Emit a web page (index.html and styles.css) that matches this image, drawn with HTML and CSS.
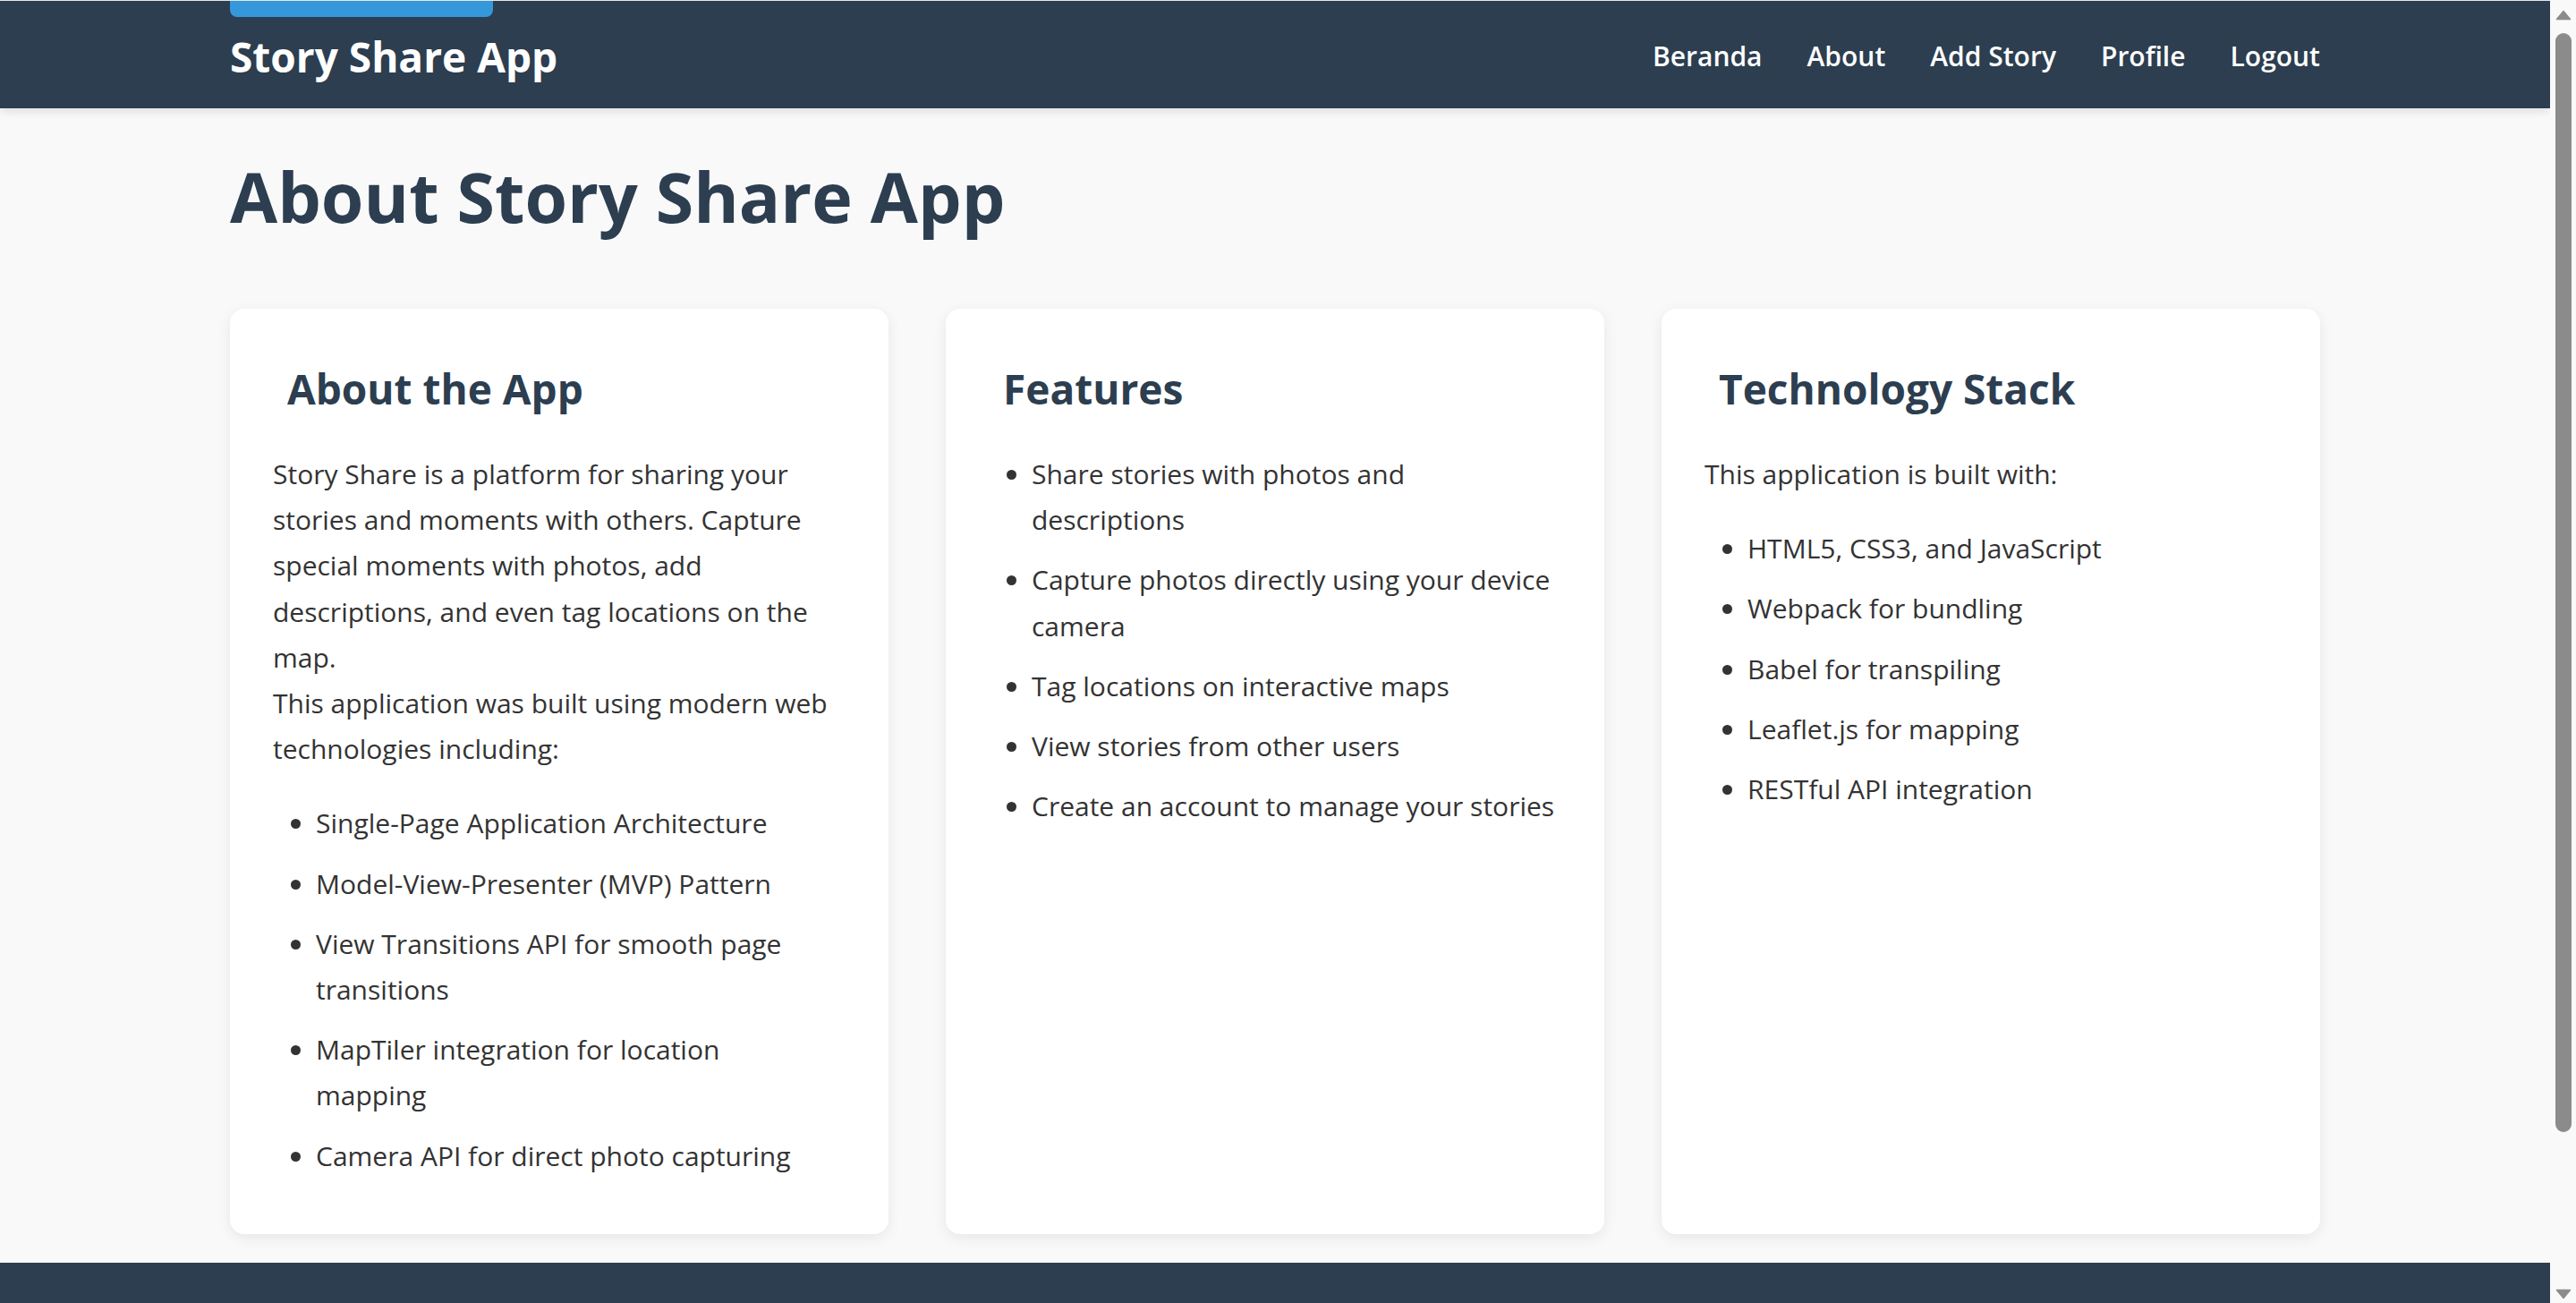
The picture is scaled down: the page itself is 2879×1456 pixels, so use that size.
FILE: index.html
```html
<!DOCTYPE html>
<html lang="en">
<head>
<meta charset="utf-8">
<title>About - Story Share App</title>
<link rel="stylesheet" href="styles.css">
</head>
<body>
<a class="skip-link" href="#main" aria-label="Skip to content"></a>
<header class="app-bar">
  <div class="app-bar__inner">
    <a class="brand" href="#/">Story Share App</a>
    <nav class="main-nav">
      <ul class="nav-list">
        <li><a href="#/">Beranda</a></li>
        <li><a href="#/about">About</a></li>
        <li><a href="#/add">Add Story</a></li>
        <li><a href="#/profile">Profile</a></li>
        <li><a href="#/logout">Logout</a></li>
      </ul>
    </nav>
  </div>
</header>
<main class="page" id="main">
  <h1 class="page-title">About Story Share App</h1>
  <div class="cards">
    <section class="card">
      <h2 class="card__title">About the App</h2>
      <p>Story Share is a platform for sharing your stories and moments with others. Capture special moments with photos, add descriptions, and even tag locations on the map.</p>
      <p>This application was built using modern web technologies including:</p>
      <ul class="card__list">
        <li>Single-Page Application Architecture</li>
        <li>Model-View-Presenter (MVP) Pattern</li>
        <li>View Transitions API for smooth page transitions</li>
        <li>MapTiler integration for location<br>mapping</li>
        <li>Camera API for direct photo capturing</li>
      </ul>
    </section>
    <section class="card">
      <h2 class="card__title">Features</h2>
      <ul class="card__list">
        <li>Share stories with photos and descriptions</li>
        <li>Capture photos directly using your device camera</li>
        <li>Tag locations on interactive maps</li>
        <li>View stories from other users</li>
        <li>Create an account to manage your stories</li>
      </ul>
    </section>
    <section class="card">
      <h2 class="card__title">Technology Stack</h2>
      <p>This application is built with:</p>
      <ul class="card__list">
        <li>HTML5, CSS3, and JavaScript</li>
        <li>Webpack for bundling</li>
        <li>Babel for transpiling</li>
        <li>Leaflet.js for mapping</li>
        <li>RESTful API integration</li>
      </ul>
    </section>
  </div>
</main>
<footer class="site-footer"></footer>
<div class="scrollbar" aria-hidden="true">
  <svg class="scrollbar__arrow scrollbar__arrow--up" width="18" height="12" viewBox="0 0 18 12"><path d="M9 1.5 L16.5 10.5 L1.5 10.5 Z" fill="#8b8b8b" stroke="#8b8b8b" stroke-width="1.5" stroke-linejoin="round"/></svg>
  <div class="scrollbar__thumb"></div>
  <svg class="scrollbar__arrow scrollbar__arrow--down" width="18" height="12" viewBox="0 0 18 12"><path d="M9 10.5 L16.5 1.5 L1.5 1.5 Z" fill="#8b8b8b" stroke="#8b8b8b" stroke-width="1.5" stroke-linejoin="round"/></svg>
</div>
</body>
</html>
```
FILE: styles.css
```css
html {
  background: #f9f9f9;
}

::-webkit-scrollbar {
  width: 0;
  height: 0;
}

body {
  margin: 0 29px 0 0;
  position: relative;
  border-top: 1px solid #e6e6e6;
  background: #f9f9f9;
  color: #333333;
  font-family: "Open Sans", "Noto Sans", sans-serif;
}

.skip-link {
  position: absolute;
  top: 0;
  left: calc(50% - 1168px);
  width: 294px;
  height: 18px;
  background: #3498db;
  border-radius: 0 0 8px 8px;
  z-index: 10;
}

.app-bar {
  background: #2c3e50;
  box-shadow: 0 4px 10px rgba(0, 0, 0, 0.1);
  position: relative;
}

.app-bar__inner {
  max-width: 2336px;
  margin: 0 auto;
  height: 120px;
  box-sizing: border-box;
  padding-top: 3px;
  display: flex;
  align-items: center;
  justify-content: space-between;
}

.brand {
  color: #ffffff;
  text-decoration: none;
  font-size: 46px;
  font-weight: 700;
}

.nav-list {
  display: flex;
  gap: 50px;
  list-style: none;
  margin: 0;
  padding: 0;
}

.nav-list a {
  color: #ffffff;
  text-decoration: none;
  font-size: 30px;
  font-weight: 600;
}

.page {
  max-width: 2336px;
  margin: 0 auto;
  padding: 51px 0 32px;
}

.page-title {
  margin: 0 0 77px;
  font-size: 77px;
  line-height: 96px;
  font-weight: 700;
  color: #2c3e50;
}

.cards {
  display: grid;
  grid-template-columns: repeat(3, minmax(0, 1fr));
  gap: 64px;
}

.card {
  background: #ffffff;
  border-radius: 16px;
  padding: 48px 48px 46px;
  box-shadow: 0 4px 16px rgba(0, 0, 0, 0.08);
}

.card__title {
  margin: 13px 0 42px;
  padding-left: 16px;
  font-size: 46px;
  line-height: 56px;
  font-weight: 700;
  color: #2c3e50;
}

.card p {
  margin: 0;
  font-size: 30px;
  line-height: 51.2px;
}

.card__list {
  margin: 0;
  padding-left: 48px;
  font-size: 30px;
  line-height: 51.2px;
}

.card p + .card__list {
  margin-top: 32px;
}

.card__list li {
  margin-bottom: 16px;
}

.site-footer {
  background: #2c3e50;
  height: 240px;
}

.scrollbar {
  position: fixed;
  top: 1px;
  right: 0;
  bottom: 0;
  width: 29px;
  background: #f9f9f9;
  display: flex;
  flex-direction: column;
  align-items: center;
  z-index: 20;
}

.scrollbar__arrow {
  display: block;
  flex: none;
}

.scrollbar__arrow--up {
  margin-top: 10px;
}

.scrollbar__thumb {
  flex: none;
  width: 18px;
  height: 1228px;
  margin-top: 14px;
  margin-left: 1px;
  background: #8b8b8b;
  border-radius: 9px;
}

.scrollbar__arrow--down {
  margin-top: auto;
  margin-bottom: 4px;
}
```
